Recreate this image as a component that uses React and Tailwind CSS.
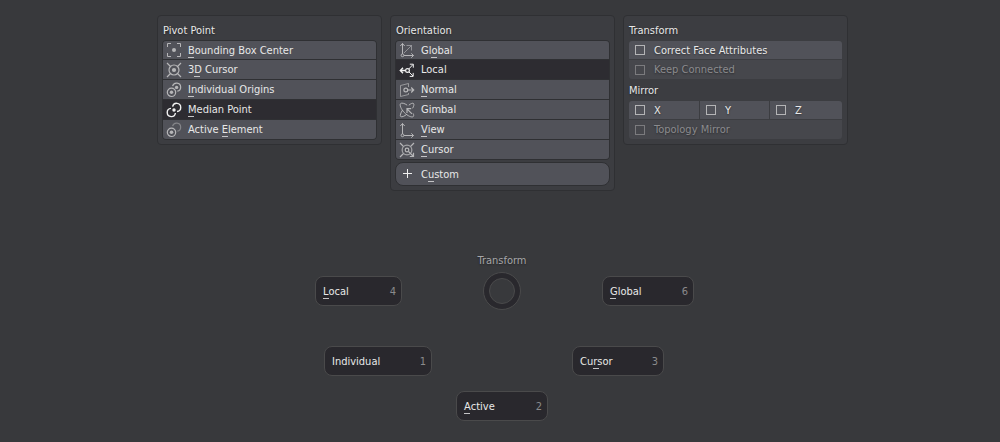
import React from "react";

function Icon({ children, bright }) {
  return (
    <svg
      viewBox="0 0 16 16"
      fill="none"
      stroke="currentColor"
      aria-hidden="true"
      className={"size-4 shrink-0 " + (bright ? "text-[#f0f0f0]" : "text-[#b6b6b8]")}
    >
      {children}
    </svg>
  );
}

const icons = {
  bounds: (
    <>
      <path d="M1.5 5V1.5H5M11 1.5h3.5V5M14.5 11v3.5H11M5 14.5H1.5V11" />
      <circle cx="8" cy="8" r="2" fill="currentColor" stroke="none" />
    </>
  ),
  cursor3d: (
    <>
      <circle cx="8" cy="8" r="5" strokeWidth="1.2" />
      <circle cx="8" cy="8" r="2.1" fill="currentColor" stroke="none" />
      <path d="M1 1l3.5 3.5M15 1l-3.5 3.5M1 15l3.5-3.5M15 15l-3.5-3.5" strokeWidth="1.2" />
    </>
  ),
  individual: (
    <>
      <circle cx="5.5" cy="10.3" r="4.2" strokeWidth="1.2" />
      <circle cx="5.5" cy="10.3" r="1.7" fill="currentColor" stroke="none" />
      <path d="M6.6 4.2a4.1 4.1 0 1 1 4.7 5" strokeWidth="1.2" />
      <circle cx="10.6" cy="5.4" r="1.7" fill="currentColor" stroke="none" />
    </>
  ),
  median: (
    <>
      <path d="M5 6.4A4.1 4.1 0 1 0 9.4 11" strokeWidth="1.4" />
      <path d="M6.6 4.6A4.1 4.1 0 1 1 11 9.5" strokeWidth="1.4" />
      <circle cx="8" cy="8" r="1.7" fill="currentColor" stroke="none" />
    </>
  ),
  active: (
    <>
      <circle cx="5.5" cy="10.3" r="4.2" strokeWidth="1.2" />
      <circle cx="5.5" cy="10.3" r="1.8" fill="currentColor" stroke="none" />
      <path d="M6.6 4.2a4.1 4.1 0 1 1 4.7 5" strokeWidth="1.2" opacity="0.5" />
    </>
  ),
  global: (
    <>
      <path d="M3.5 12V1.5M1.3 4l2.2-2.5L5.7 4M5 13.5h9.5M12.3 11.3l2.2 2.2-2.2 2.2" />
      <circle cx="3.5" cy="13.3" r="1.4" />
      <path d="M5 11l7.5-7.5M7.5 3.5h5v5" opacity="0.65" />
    </>
  ),
  local: (
    <>
      <path d="M1.5 8.5H6M4 5.8L1.3 8.5 4 11.2" strokeWidth="1.4" />
      <circle cx="8.5" cy="8.5" r="1.9" strokeWidth="1.2" />
      <path d="M9.8 7l4.2-4.5M10.8 2.2h3.5v3.5M10 10l4 4M14.2 10.9v3.5h-3.5" />
    </>
  ),
  normal: (
    <>
      <path d="M9.5 5V1.5L1.5 3.5v11L9.5 12.5V11" opacity="0.7" />
      <circle cx="6.8" cy="8" r="1.9" strokeWidth="1.2" />
      <path d="M9 8h5.5M12.2 5.5L14.7 8l-2.5 2.5" strokeWidth="1.2" />
    </>
  ),
  gimbal: (
    <>
      <path d="M8.2 3.2C5.5 1.2 2.6 .6 1.6 1.6.3 3 2 7 5.3 10.5s7.6 5.3 9 4c.6-.6.5-1.7-.1-3" />
      <path d="M9.8 3.2C12 1.5 13.8 .8 14.5 1.5c.8.9.3 2.7-.9 4.8M3.6 8C1.6 11 .8 13.6 1.7 14.5c1 .9 3.7-.2 6.3-2.4" />
      <path d="M13 11.9L8 6.9M8 11V6.7h4.2" strokeWidth="1.2" />
    </>
  ),
  view: (
    <>
      <path d="M3.5 12V1.5M1.3 4l2.2-2.5L5.7 4M5 13.5h9.5M12.3 11.3l2.2 2.2-2.2 2.2" />
      <circle cx="3.5" cy="13.3" r="1.4" />
    </>
  ),
  cursor: (
    <>
      <circle cx="8" cy="8" r="4.9" />
      <circle cx="8" cy="8" r="1.8" strokeWidth="1.2" />
      <path d="M1 1l3.5 3.5M15 1l-3.5 3.5M1 15l3.5-3.5M9.5 9.5l5 5M14.5 10.8v3.7h-3.7" strokeWidth="1.2" />
    </>
  ),
  plus: <path d="M8.5 3v9M4 7.5h9" />,
};

/* A label whose access key (the character at index `hot`) is underlined. */
function HotLabel({ text, hot }) {
  if (hot === undefined) return <span className="pt-px">{text}</span>;
  return (
    <span className="pt-px whitespace-pre">
      {text.slice(0, hot)}
      <span className="relative after:absolute after:left-0 after:-bottom-px after:h-px after:w-1.5 after:bg-[#c4c4c6]">
        {text[hot]}
      </span>
      {text.slice(hot + 1)}
    </span>
  );
}

function Panel({ children }) {
  return (
    <section className="w-[225px] rounded-[4px] border border-[#2f3033] bg-[#3c3d41] p-1">
      {children}
    </section>
  );
}

function Heading({ children }) {
  return <h2 className="h-5 pt-[3px] pl-px">{children}</h2>;
}

function OptionList({ options, selected }) {
  return (
    <div className="flex flex-col gap-px overflow-hidden rounded-[4px] border border-[#2f3033] bg-[#2f3033]">
      {options.map((o, i) => {
        const on = o.text === selected;
        return (
          <button
            key={o.text}
            type="button"
            aria-pressed={on}
            className={
              "flex items-center gap-[6px] pl-[3px] text-left " +
              (i === 0 ? "h-[18px] " : "h-[19px] ") +
              (on ? "bg-[#2d2c31]" : "bg-[#515259]")
            }
          >
            <Icon bright={on}>{icons[o.icon]}</Icon>
            <HotLabel text={o.text} hot={o.hot} />
          </button>
        );
      })}
    </div>
  );
}

function Check({ label, disabled, className }) {
  return (
    <label
      className={
        "flex items-center gap-[9px] pl-[6px] " +
        (disabled ? "bg-[#46474c] text-[#8b8b8e] " : "bg-[#515259] ") +
        className
      }
    >
      <input
        type="checkbox"
        disabled={disabled}
        className={
          "size-[10px] shrink-0 appearance-none border checked:bg-[#b4b4b6] " +
          (disabled ? "border-[#7b7b7e]" : "border-[#b4b4b6]")
        }
      />
      <span className="pt-px">{label}</span>
    </label>
  );
}

function PieItem({ text, hot, num, className }) {
  return (
    <button
      type="button"
      className={
        "flex h-[30px] items-center justify-between rounded-[8px] border border-[#4a4a4b] bg-[#29282d] pr-[5px] pl-[7px] " +
        className
      }
    >
      <HotLabel text={text} hot={hot} />
      <span className="pt-px text-[#8a8a8c]">{num}</span>
    </button>
  );
}

const pivots = [
  { text: "Bounding Box Center", hot: 0, icon: "bounds" },
  { text: "3D Cursor", hot: 1, icon: "cursor3d" },
  { text: "Individual Origins", hot: 0, icon: "individual" },
  { text: "Median Point", hot: 0, icon: "median" },
  { text: "Active Element", hot: 7, icon: "active" },
];

const orientations = [
  { text: "Global", hot: 2, icon: "global" },
  { text: "Local", icon: "local" },
  { text: "Normal", hot: 0, icon: "normal" },
  { text: "Gimbal", icon: "gimbal" },
  { text: "View", hot: 0, icon: "view" },
  { text: "Cursor", hot: 0, icon: "cursor" },
];

export default function App() {
  return (
    <main className="min-h-screen bg-[#38393c] pt-[15px] font-['DejaVu_Sans_Condensed','DejaVu_Sans',sans-serif] text-[11px] leading-[16px] text-[#e8e8e8] [text-shadow:0_1px_2px_rgb(0_0_0/0.4)]">
      <div className="flex min-h-[176px] items-start justify-center gap-2 pl-[5px]">
        <Panel>
          <Heading>Pivot Point</Heading>
          <OptionList options={pivots} selected="Median Point" />
        </Panel>
        <Panel>
          <Heading>Orientation</Heading>
          <OptionList options={orientations} selected="Local" />
          <button
            type="button"
            className="mt-[2px] flex h-6 w-full items-center gap-[6px] rounded-[8px] border border-[#2f3033] bg-[#515259] pl-[3px]"
          >
            <Icon bright>{icons.plus}</Icon>
            <HotLabel text="Custom" hot={1} />
          </button>
        </Panel>
        <Panel>
          <Heading>Transform</Heading>
          <div className="m-px mb-0 flex flex-col gap-px overflow-hidden rounded-[3px]">
            <Check label="Correct Face Attributes" className="h-[18px]" />
            <Check label="Keep Connected" disabled className="h-[19px]" />
          </div>
          <div className="mt-px">
            <Heading>Mirror</Heading>
          </div>
          <div className="m-px flex flex-col gap-px overflow-hidden rounded-[3px]">
            <div className="grid grid-cols-[70fr_69fr_72fr] gap-px">
              <Check label="X" className="h-[18px]" />
              <Check label="Y" className="h-[18px]" />
              <Check label="Z" className="h-[18px]" />
            </div>
            <Check label="Topology Mirror" disabled className="h-[19px]" />
          </div>
        </Panel>
      </div>

      <nav aria-label="Transform" className="flex flex-col items-center pt-[62px] pl-1">
        <h2 className="text-[#a6a6a8]">Transform</h2>
        <div className="mt-[3px] grid w-full grid-cols-[1fr_200px_1fr] items-center">
          <PieItem text="Local" hot={0} num="4" className="w-[87px] justify-self-end" />
          <div className="flex size-[38px] items-center justify-center justify-self-center rounded-full border border-[#4a4a4b] bg-[#29282d]">
            <div className="size-[26px] rounded-full border border-[#4a4a4b] bg-[#38393c]" />
          </div>
          <PieItem text="Global" hot={0} num="6" className="w-[92px]" />
        </div>
        <div className="mt-9 grid w-full grid-cols-[1fr_140px_1fr]">
          <PieItem text="Individual" num="1" className="w-[108px] justify-self-end" />
          <span />
          <PieItem text="Cursor" hot={2} num="3" className="w-[92px]" />
        </div>
        <PieItem text="Active" hot={0} num="2" className="mt-[15px] w-[92px]" />
      </nav>
    </main>
  );
}
